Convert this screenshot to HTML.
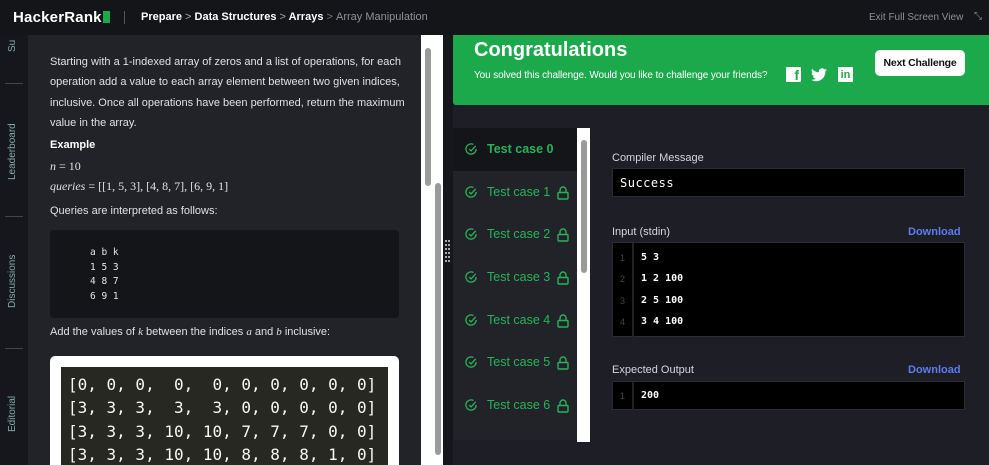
<!DOCTYPE html>
<html><head><meta charset="utf-8"><style>
*{margin:0;padding:0;box-sizing:border-box}
html,body{width:989px;height:465px;overflow:hidden}
body{background:#1e1f26;font-family:"Liberation Sans",sans-serif;position:relative;color:#e4e5e7}
.a{position:absolute}
.hdr{left:0;top:0;width:989px;height:35px;background:#141519}
.mono{font-family:"DejaVu Sans Mono","Liberation Mono",monospace}
.p{left:50px;font-size:11px;color:#dfe0e3}
.tc{left:453px;width:124px;height:43px;font-size:12.5px;color:#27b35a}
.tc span{position:absolute;left:34px;top:14px}
.tc svg{position:absolute}
.lbl{left:612px;font-size:11px;color:#d5d6da}
.dl{left:908px;font-size:11px;color:#5b7cf2;font-weight:bold}
.box{left:612px;width:353px;background:#000;border:1px solid #2a2b33}
.ln{font-size:9px;color:#444;position:absolute;left:7px}
.cv{font-size:10px;color:#fff;font-weight:bold;position:absolute;left:28px}
</style></head><body>
<div class="a hdr"></div>
<div class="a" style="left:13px;top:9px;font-size:15px;font-weight:bold;color:#fff;letter-spacing:.2px">HackerRank<span style="display:inline-block;width:7px;height:12px;background:#1ba94c;margin-left:1px;vertical-align:-1px"></span></div>
<div class="a" style="left:124px;top:11px;width:1px;height:13px;background:#555"></div>
<div class="a" style="left:141px;top:11px;font-size:11px;color:#fff;font-weight:bold">Prepare <span style="font-weight:normal;color:#aaa">&gt;</span> Data Structures <span style="font-weight:normal;color:#aaa">&gt;</span> Arrays <span style="font-weight:normal;color:#777">&gt;</span> <span style="font-weight:normal;color:#8d9099">Array Manipulation</span></div>
<div class="a" style="left:869px;top:12px;font-size:10px;color:#8d9099">Exit Full Screen View</div>
<div class="a" style="left:974px;top:11px;font-size:10px;color:#8d9099">⤡</div>
<!-- sidebar -->
<div class="a" style="left:0;top:35px;width:28px;height:430px;background:#16171c"></div>
<div class="a" style="left:5px;top:83px;width:18px;height:1px;background:#444"></div>
<div class="a" style="left:5px;top:216px;width:18px;height:1px;background:#444"></div>
<div class="a" style="left:5px;top:348px;width:18px;height:1px;background:#444"></div>
<div class="a" style="left:7px;top:52px;font-size:10px;color:#8aa;transform:rotate(-90deg);transform-origin:left top;white-space:nowrap">Su</div>
<div class="a" style="left:7px;top:180px;font-size:10px;color:#8aa;transform:rotate(-90deg);transform-origin:left top;white-space:nowrap">Leaderboard</div>
<div class="a" style="left:7px;top:308px;font-size:10px;color:#8aa;transform:rotate(-90deg);transform-origin:left top;white-space:nowrap">Discussions</div>
<div class="a" style="left:7px;top:432px;font-size:10px;color:#8aa;transform:rotate(-90deg);transform-origin:left top;white-space:nowrap">Editorial</div>
<!-- content -->
<div class="a" style="left:28px;top:35px;width:393px;height:430px;background:#222329"></div>
<div class="a p" style="top:52px;line-height:20.4px;width:360px">Starting with a 1-indexed array of zeros and a list of operations, for each operation add a value to each array element between two given indices, inclusive. Once all operations have been performed, return the maximum value in the array.</div>
<div class="a p" style="top:139px;font-weight:bold;color:#fff">Example</div>
<div class="a p" style="top:159px;font-family:'Liberation Serif',serif;font-size:12px"><i>n</i> = 10</div>
<div class="a p" style="top:179px;font-family:'Liberation Serif',serif;font-size:12px"><i>queries</i> = [[1, 5, 3], [4, 8, 7], [6, 9, 1]</div>
<div class="a p" style="top:205px">Queries are interpreted as follows:</div>
<div class="a" style="left:50px;top:230px;width:349px;height:88px;background:#141519;border-radius:4px"></div>
<div class="a mono" style="left:90px;top:246px;font-size:9.5px;line-height:14.7px;color:#e4e5e7;white-space:pre">a b k
1 5 3
4 8 7
6 9 1</div>
<div class="a p" style="top:326px">Add the values of <i style="font-family:'Liberation Serif',serif">k</i> between the indices <i style="font-family:'Liberation Serif',serif">a</i> and <i style="font-family:'Liberation Serif',serif">b</i> inclusive:</div>
<div class="a" style="left:50px;top:356px;width:349px;height:120px;background:#fff;border-radius:5px"></div>
<div class="a" style="left:61px;top:367px;width:327px;height:110px;background:#272822"></div>
<div class="a mono" style="left:68px;top:373px;font-size:16px;line-height:23.3px;color:#f8f8f2;white-space:pre">[0, 0, 0,  0,  0, 0, 0, 0, 0, 0]
[3, 3, 3,  3,  3, 0, 0, 0, 0, 0]
[3, 3, 3, 10, 10, 7, 7, 7, 0, 0]
[3, 3, 3, 10, 10, 8, 8, 8, 1, 0]</div>
<!-- left scrollbars -->
<div class="a" style="left:421px;top:35px;width:22px;height:430px;background:#fff"></div>
<div class="a" style="left:425px;top:48px;width:6px;height:138px;background:#9a9a9a;border-radius:3px"></div>
<div class="a" style="left:435px;top:183px;width:6px;height:272px;background:#9a9a9a;border-radius:3px"></div>
<div class="a" style="left:443px;top:35px;width:10px;height:430px;background:#16171c"></div>
<div class="a" style="left:445px;top:240px;width:5px;height:22px;border-left:2px dotted #aaa;border-right:2px dotted #aaa"></div>
<!-- banner -->
<div class="a" style="left:453px;top:35px;width:536px;height:70px;background:#1ba94c;border-radius:0 0 0 3px"></div>
<div class="a" style="left:474px;top:39px;font-size:20px;font-weight:bold;color:#fff">Congratulations</div>
<div class="a" style="left:474px;top:70px;font-size:10px;color:#fff;letter-spacing:-0.1px">You solved this challenge. Would you like to challenge your friends?</div>
<div class="a" style="left:786px;top:67px;width:15px;height:15px;background:#fff;border-radius:1px;color:#1ba94c;font-weight:bold;font-size:14px;text-align:right;padding-right:2px;line-height:17px;overflow:hidden">f</div>
<svg class="a" style="left:811px;top:68px" width="16" height="14" viewBox="0 0 24 20"><path fill="#fff" d="M24 2.4a10 10 0 0 1-2.8.8A5 5 0 0 0 23.3.4a10 10 0 0 1-3.1 1.2A4.9 4.9 0 0 0 11.8 6 14 14 0 0 1 1.7.9a4.9 4.9 0 0 0 1.5 6.6A4.9 4.9 0 0 1 1 6.9a4.9 4.9 0 0 0 3.9 4.8 5 5 0 0 1-2.2.1 4.9 4.9 0 0 0 4.6 3.4A9.9 9.9 0 0 1 0 17.2 14 14 0 0 0 7.5 19.4c9.1 0 14-7.5 14-14v-.6A10 10 0 0 0 24 2.4z"/></svg>
<div class="a" style="left:838px;top:67px;width:15px;height:15px;background:#fff;border-radius:1px;color:#1ba94c;font-weight:bold;font-size:11px;text-align:center;line-height:16px">in</div>
<div class="a" style="left:875px;top:50px;width:90px;height:26px;background:#fff;border-radius:5px;font-size:10.5px;font-weight:bold;color:#111;text-align:center;line-height:26px;letter-spacing:-0.2px">Next Challenge</div>
<!-- test cases -->
<div class="a" style="left:453px;top:128px;width:124px;height:312px;background:#222329"></div>
<div class="a" style="left:453px;top:128px;width:124px;height:43px;background:#141519"></div>
<div class="a tc" style="top:128px"><svg style="left:12px;top:15px" width="13" height="13" viewBox="0 0 14 14"><path d="M12 6.5A5.5 5.5 0 1 1 9 1.6" fill="none" stroke="#27b35a" stroke-width="1.4"/><path d="M4.5 6.5l2 2 5-5.5" fill="none" stroke="#27b35a" stroke-width="1.4"/></svg><span style="font-weight:bold">Test case 0</span></div>
<div class="a tc" style="top:171px"><svg style="left:12px;top:15px" width="13" height="13" viewBox="0 0 14 14"><path d="M12 6.5A5.5 5.5 0 1 1 9 1.6" fill="none" stroke="#27b35a" stroke-width="1.4"/><path d="M4.5 6.5l2 2 5-5.5" fill="none" stroke="#27b35a" stroke-width="1.4"/></svg><span>Test case 1</span><svg style="left:104px;top:15px" width="12" height="14" viewBox="0 0 12 14"><path d="M3 6V4a3 3 0 0 1 6 0v2" fill="none" stroke="#27b35a" stroke-width="1.4"/><rect x="1" y="6.5" width="10" height="6.5" rx="1" fill="none" stroke="#27b35a" stroke-width="1.4"/></svg></div>
<div class="a tc" style="top:213px"><svg style="left:12px;top:15px" width="13" height="13" viewBox="0 0 14 14"><path d="M12 6.5A5.5 5.5 0 1 1 9 1.6" fill="none" stroke="#27b35a" stroke-width="1.4"/><path d="M4.5 6.5l2 2 5-5.5" fill="none" stroke="#27b35a" stroke-width="1.4"/></svg><span>Test case 2</span><svg style="left:104px;top:15px" width="12" height="14" viewBox="0 0 12 14"><path d="M3 6V4a3 3 0 0 1 6 0v2" fill="none" stroke="#27b35a" stroke-width="1.4"/><rect x="1" y="6.5" width="10" height="6.5" rx="1" fill="none" stroke="#27b35a" stroke-width="1.4"/></svg></div>
<div class="a tc" style="top:256px"><svg style="left:12px;top:15px" width="13" height="13" viewBox="0 0 14 14"><path d="M12 6.5A5.5 5.5 0 1 1 9 1.6" fill="none" stroke="#27b35a" stroke-width="1.4"/><path d="M4.5 6.5l2 2 5-5.5" fill="none" stroke="#27b35a" stroke-width="1.4"/></svg><span>Test case 3</span><svg style="left:104px;top:15px" width="12" height="14" viewBox="0 0 12 14"><path d="M3 6V4a3 3 0 0 1 6 0v2" fill="none" stroke="#27b35a" stroke-width="1.4"/><rect x="1" y="6.5" width="10" height="6.5" rx="1" fill="none" stroke="#27b35a" stroke-width="1.4"/></svg></div>
<div class="a tc" style="top:299px"><svg style="left:12px;top:15px" width="13" height="13" viewBox="0 0 14 14"><path d="M12 6.5A5.5 5.5 0 1 1 9 1.6" fill="none" stroke="#27b35a" stroke-width="1.4"/><path d="M4.5 6.5l2 2 5-5.5" fill="none" stroke="#27b35a" stroke-width="1.4"/></svg><span>Test case 4</span><svg style="left:104px;top:15px" width="12" height="14" viewBox="0 0 12 14"><path d="M3 6V4a3 3 0 0 1 6 0v2" fill="none" stroke="#27b35a" stroke-width="1.4"/><rect x="1" y="6.5" width="10" height="6.5" rx="1" fill="none" stroke="#27b35a" stroke-width="1.4"/></svg></div>
<div class="a tc" style="top:341px"><svg style="left:12px;top:15px" width="13" height="13" viewBox="0 0 14 14"><path d="M12 6.5A5.5 5.5 0 1 1 9 1.6" fill="none" stroke="#27b35a" stroke-width="1.4"/><path d="M4.5 6.5l2 2 5-5.5" fill="none" stroke="#27b35a" stroke-width="1.4"/></svg><span>Test case 5</span><svg style="left:104px;top:15px" width="12" height="14" viewBox="0 0 12 14"><path d="M3 6V4a3 3 0 0 1 6 0v2" fill="none" stroke="#27b35a" stroke-width="1.4"/><rect x="1" y="6.5" width="10" height="6.5" rx="1" fill="none" stroke="#27b35a" stroke-width="1.4"/></svg></div>
<div class="a tc" style="top:384px"><svg style="left:12px;top:15px" width="13" height="13" viewBox="0 0 14 14"><path d="M12 6.5A5.5 5.5 0 1 1 9 1.6" fill="none" stroke="#27b35a" stroke-width="1.4"/><path d="M4.5 6.5l2 2 5-5.5" fill="none" stroke="#27b35a" stroke-width="1.4"/></svg><span>Test case 6</span><svg style="left:104px;top:15px" width="12" height="14" viewBox="0 0 12 14"><path d="M3 6V4a3 3 0 0 1 6 0v2" fill="none" stroke="#27b35a" stroke-width="1.4"/><rect x="1" y="6.5" width="10" height="6.5" rx="1" fill="none" stroke="#27b35a" stroke-width="1.4"/></svg></div>
<div class="a" style="left:577px;top:128px;width:13px;height:314px;background:#fff"></div>
<div class="a" style="left:581px;top:140px;width:6px;height:133px;background:#9a9a9a;border-radius:3px"></div>
<!-- right output -->
<div class="a lbl" style="top:152px">Compiler Message</div>
<div class="a box" style="top:168px;height:29px"><span class="mono" style="position:absolute;left:7px;top:7px;font-size:12px;color:#fff;letter-spacing:.5px">Success</span></div>
<div class="a lbl" style="top:226px">Input (stdin)</div>
<div class="a dl" style="top:226px">Download</div>
<div class="a box" style="top:242px;height:95px"><div class="a" style="left:19px;top:0;width:2px;height:95px;background:#222"></div>
<span class="ln" style="top:10px">1</span><span class="cv mono" style="top:9px">5 3</span>
<span class="ln" style="top:31px">2</span><span class="cv mono" style="top:30px">1 2 100</span>
<span class="ln" style="top:53px">3</span><span class="cv mono" style="top:52px">2 5 100</span>
<span class="ln" style="top:74px">4</span><span class="cv mono" style="top:73px">3 4 100</span></div>
<div class="a lbl" style="top:364px">Expected Output</div>
<div class="a dl" style="top:364px">Download</div>
<div class="a box" style="top:381px;height:29px"><div class="a" style="left:19px;top:0;width:2px;height:29px;background:#222"></div><span class="ln" style="top:9px">1</span><span class="cv mono" style="top:8px">200</span></div>
</body></html>
